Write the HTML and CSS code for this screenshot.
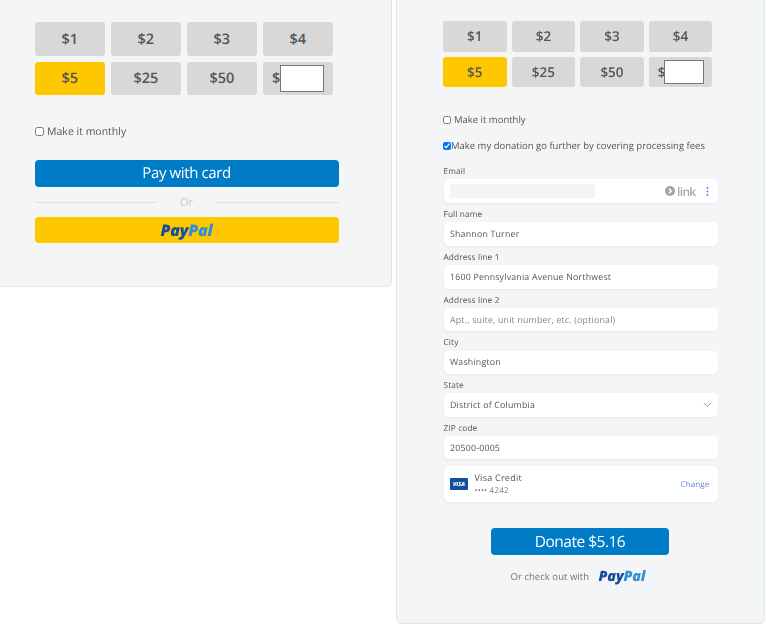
FILE: index.html
```html
<!DOCTYPE html>
<html lang="en">
<head>
<meta charset="utf-8">
<title>Donate</title>
<link rel="stylesheet" href="styles.css">
</head>
<body>
<main class="page">
  <section class="panel panel-left">
    <div class="amounts">
      <button class="amount">$1</button>
      <button class="amount">$2</button>
      <button class="amount">$3</button>
      <button class="amount">$4</button>
      <button class="amount selected">$5</button>
      <button class="amount">$25</button>
      <button class="amount">$50</button>
      <div class="amount other">$<input class="other-input" type="text" aria-label="Other amount"></div>
    </div>
    <label class="check monthly"><input type="checkbox"><span>Make it monthly</span></label>
    <button class="pay">Pay with card</button>
    <div class="or"><span>Or</span></div>
    <button class="paypal-btn"><span class="pp-logo"><span class="pp-dark">Pay</span><span class="pp-light">Pal</span></span></button>
  </section>

  <section class="panel panel-right">
    <div class="amounts">
      <button class="amount">$1</button>
      <button class="amount">$2</button>
      <button class="amount">$3</button>
      <button class="amount">$4</button>
      <button class="amount selected">$5</button>
      <button class="amount">$25</button>
      <button class="amount">$50</button>
      <div class="amount other">$<input class="other-input" type="text" aria-label="Other amount"></div>
    </div>
    <label class="check monthly"><input type="checkbox"><span>Make it monthly</span></label>
    <label class="check fees"><input type="checkbox" checked><span>Make my donation go further by covering processing fees</span></label>

    <div class="form">
      <div class="field">
        <div class="label">Email</div>
        <div class="box email">
          <span class="masked"></span>
          <span class="link">
            <svg class="link-arrow" width="10" height="10" viewBox="0 0 10 10"><circle cx="5" cy="5" r="5" fill="#a3a3a3"/><path d="M3.9 2.6 6.3 5 3.9 7.4" fill="none" stroke="#f4f5f7" stroke-width="1.6"/></svg>link
          </span>
          <svg class="dots" width="3" height="9" viewBox="0 0 3 9"><circle cx="1.5" cy="1" r=".9" fill="#4f7bf0"/><circle cx="1.5" cy="4.5" r=".9" fill="#4f7bf0"/><circle cx="1.5" cy="8" r=".9" fill="#4f7bf0"/></svg>
        </div>
      </div>
      <div class="field">
        <div class="label">Full name</div>
        <div class="box">Shannon Turner</div>
      </div>
      <div class="field">
        <div class="label">Address line 1</div>
        <div class="box">1600 Pennsylvania Avenue Northwest</div>
      </div>
      <div class="field">
        <div class="label">Address line 2</div>
        <div class="box placeholder">Apt., suite, unit number, etc. (optional)</div>
      </div>
      <div class="field">
        <div class="label">City</div>
        <div class="box">Washington</div>
      </div>
      <div class="field">
        <div class="label">State</div>
        <div class="box select">District of Columbia
          <svg width="9" height="5" viewBox="0 0 9 5"><path d="M.7.7 4.5 4.2 8.3.7" fill="none" stroke="#8a8f96" stroke-width=".9"/></svg>
        </div>
      </div>
      <div class="field">
        <div class="label">ZIP code</div>
        <div class="box">20500-0005</div>
      </div>
      <div class="box card">
        <span class="visa">VISA</span>
        <div class="card-text">
          <div class="card-name">Visa Credit</div>
          <div class="card-num">•••• 4242</div>
        </div>
        <span class="change">Change</span>
      </div>
    </div>

    <button class="donate">Donate $5.16</button>
    <div class="checkout">Or check out with <span class="pp-logo"><span class="pp-dark">Pay</span><span class="pp-light">Pal</span></span></div>
  </section>
</main>
</body>
</html>
```

FILE: styles.css
```css
* { box-sizing: border-box; }
html, body { margin: 0; padding: 0; background: #fff; }
body { font-family: "Open Sans", "Noto Sans", sans-serif; color: #555; text-rendering: geometricPrecision; }
button { font-family: inherit; cursor: pointer; padding: 0; border: 0; text-rendering: geometricPrecision; }

.page { display: flex; align-items: flex-start; width: 766px; height: 625px; overflow: hidden; filter: blur(.3px); }

.panel { background: #f4f5f7; border: 1px solid #dfe5e8; }

.panel-left {
  width: 392px; height: 286.5px;
  margin-right: 4px;
  border-width: 0 1px 1px 0;
  border-bottom-right-radius: 6px;
  padding: 22px 0 0 34.6px;
}
.panel-right {
  width: 369px; height: 624px;
  border-width: 0 1px 1px 1px;
  border-radius: 0 0 6px 6px;
  padding: 21px 0 0 46px;
}

.amounts { display: grid; }
.panel-left .amounts { grid-template-columns: repeat(4, 70.5px); grid-auto-rows: 33.5px; gap: 6px 5.5px; }
.panel-right .amounts { grid-template-columns: repeat(4, 63.6px); grid-auto-rows: 30.5px; gap: 5px 5px; }

.amount {
  background: #d8d8d8; border-radius: 3px; color: #555;
  font-weight: 600; display: flex; align-items: center; justify-content: center;
}
.panel-left .amount { font-size: 14.5px; padding-top: 1px; }
.panel-right .amount { font-size: 13.5px; }
.panel-left .other { padding-top: 0; }
.amount.selected { background: #ffc700; }
.amount.other { justify-content: flex-start; }
.panel-left .other { padding-left: 9.5px; }
.panel-right .other { padding-left: 9px; }
.other-input { background: #fff; border: 1px solid #767676; padding: 0; margin: 0; border-radius: 0; }
.panel-left .other-input { width: 43.5px; height: 27px; border-width: 1.2px; }
.panel-right .other-input { width: 39.5px; height: 24px; border-width: 1px; margin-left: -1.5px; }

.check { display: flex; align-items: center; color: #555; }
.check input { margin: 0; width: 8px; height: 8px; flex: none; }
.panel-left .monthly { margin-top: 29.5px; font-size: 10.5px; line-height: 14px; }
.panel-left .monthly input { width: 9.5px; height: 9.5px; margin-right: 3px; }
.panel-right .monthly { margin-top: 26px; font-size: 9.5px; line-height: 14px; }
.panel-right .monthly input { width: 8px; height: 8px; margin-right: 3px; }
.fees { margin-top: 12px; font-size: 9.5px; line-height: 14px; }

.pay {
  display: block; width: 304px; height: 27px; margin-top: 21px;
  background: #007bc6; color: #fff; border-radius: 4px;
  font-size: 15px; letter-spacing: -.38px; line-height: 27px;
}
.or {
  width: 304px; height: 16px; margin-top: 8px;
  display: flex; align-items: center; gap: 23px;
  font-size: 11px; color: #c4c6c8;
}
.or::before, .or::after { content: ""; flex: 1; height: 1px; background: #e0e3e6; }
.paypal-btn {
  display: block; width: 304px; height: 26.5px; margin-top: 6px;
  background: #ffc700; border-radius: 4px;
}
.pp-logo { font-family: "Open Sans", sans-serif; font-style: italic; font-weight: 800; letter-spacing: -.2px; }
.paypal-btn .pp-logo { font-size: 16px; line-height: 26px; }
.pp-dark { color: #12509c; }
.pp-light { color: #2f8fd8; }

.form { display: flex; flex-direction: column; width: 274px; margin: 12.25px 0 0 .5px; }
.field { display: flex; flex-direction: column; }
.label {
  height: 19.2px; line-height: 16px; padding-top: 4px;
  font-size: 8.3px; color: #555; letter-spacing: .12px;
}
.box {
  height: 23.5px; background: #fff; border-radius: 5px;
  box-shadow: 0 1px 2px rgba(60, 70, 90, .08);
  display: flex; align-items: center; padding-left: 6.5px;
  font-size: 8.8px; color: #555; letter-spacing: .2px;
}
.field:first-child .label { height: 14px; padding-top: 0; line-height: 14px; }
.box.email { height: 24px; padding-right: 9px; }
.masked { width: 145px; height: 14px; background: #f4f5f7; }
.link {
  margin-left: auto; display: flex; align-items: center; gap: 2.5px;
  font-size: 12px; color: #a9a9a9; font-weight: 600; letter-spacing: -.7px;
}
.dots { margin-left: 10px; }
.placeholder { color: #80858c; }
.select { justify-content: space-between; padding-right: 6px; }
.card { height: 36px; margin-top: 7px; padding-right: 8px; }
.visa {
  width: 18px; height: 12px; background: #12509c; border-radius: 1px;
  color: #fff; font-size: 5.5px; font-weight: 800; font-style: italic;
  display: flex; align-items: center; justify-content: center; letter-spacing: 0;
}
.card-text { margin-left: 6.5px; }
.card-name { font-size: 9px; line-height: 12px; letter-spacing: .25px; padding-top: 1px; }
.card-num { font-size: 8px; line-height: 12px; color: #777; margin-top: 1px; }
.change { margin-left: auto; color: #5a86dc; font-size: 8px; letter-spacing: .15px; }

.donate {
  display: block; width: 178px; height: 27px; margin: 25.5px 0 0 48px;
  background: #007bc6; color: #fff; border-radius: 4px;
  font-size: 15.5px; letter-spacing: -.5px; line-height: 27px;
}
.checkout {
  margin: 12px 0 0 67.5px; display: flex; align-items: center; gap: 7px;
  font-size: 9.6px; color: #777; line-height: 20px; white-space: pre;
}
.checkout .pp-logo { font-size: 14.4px; }
```
